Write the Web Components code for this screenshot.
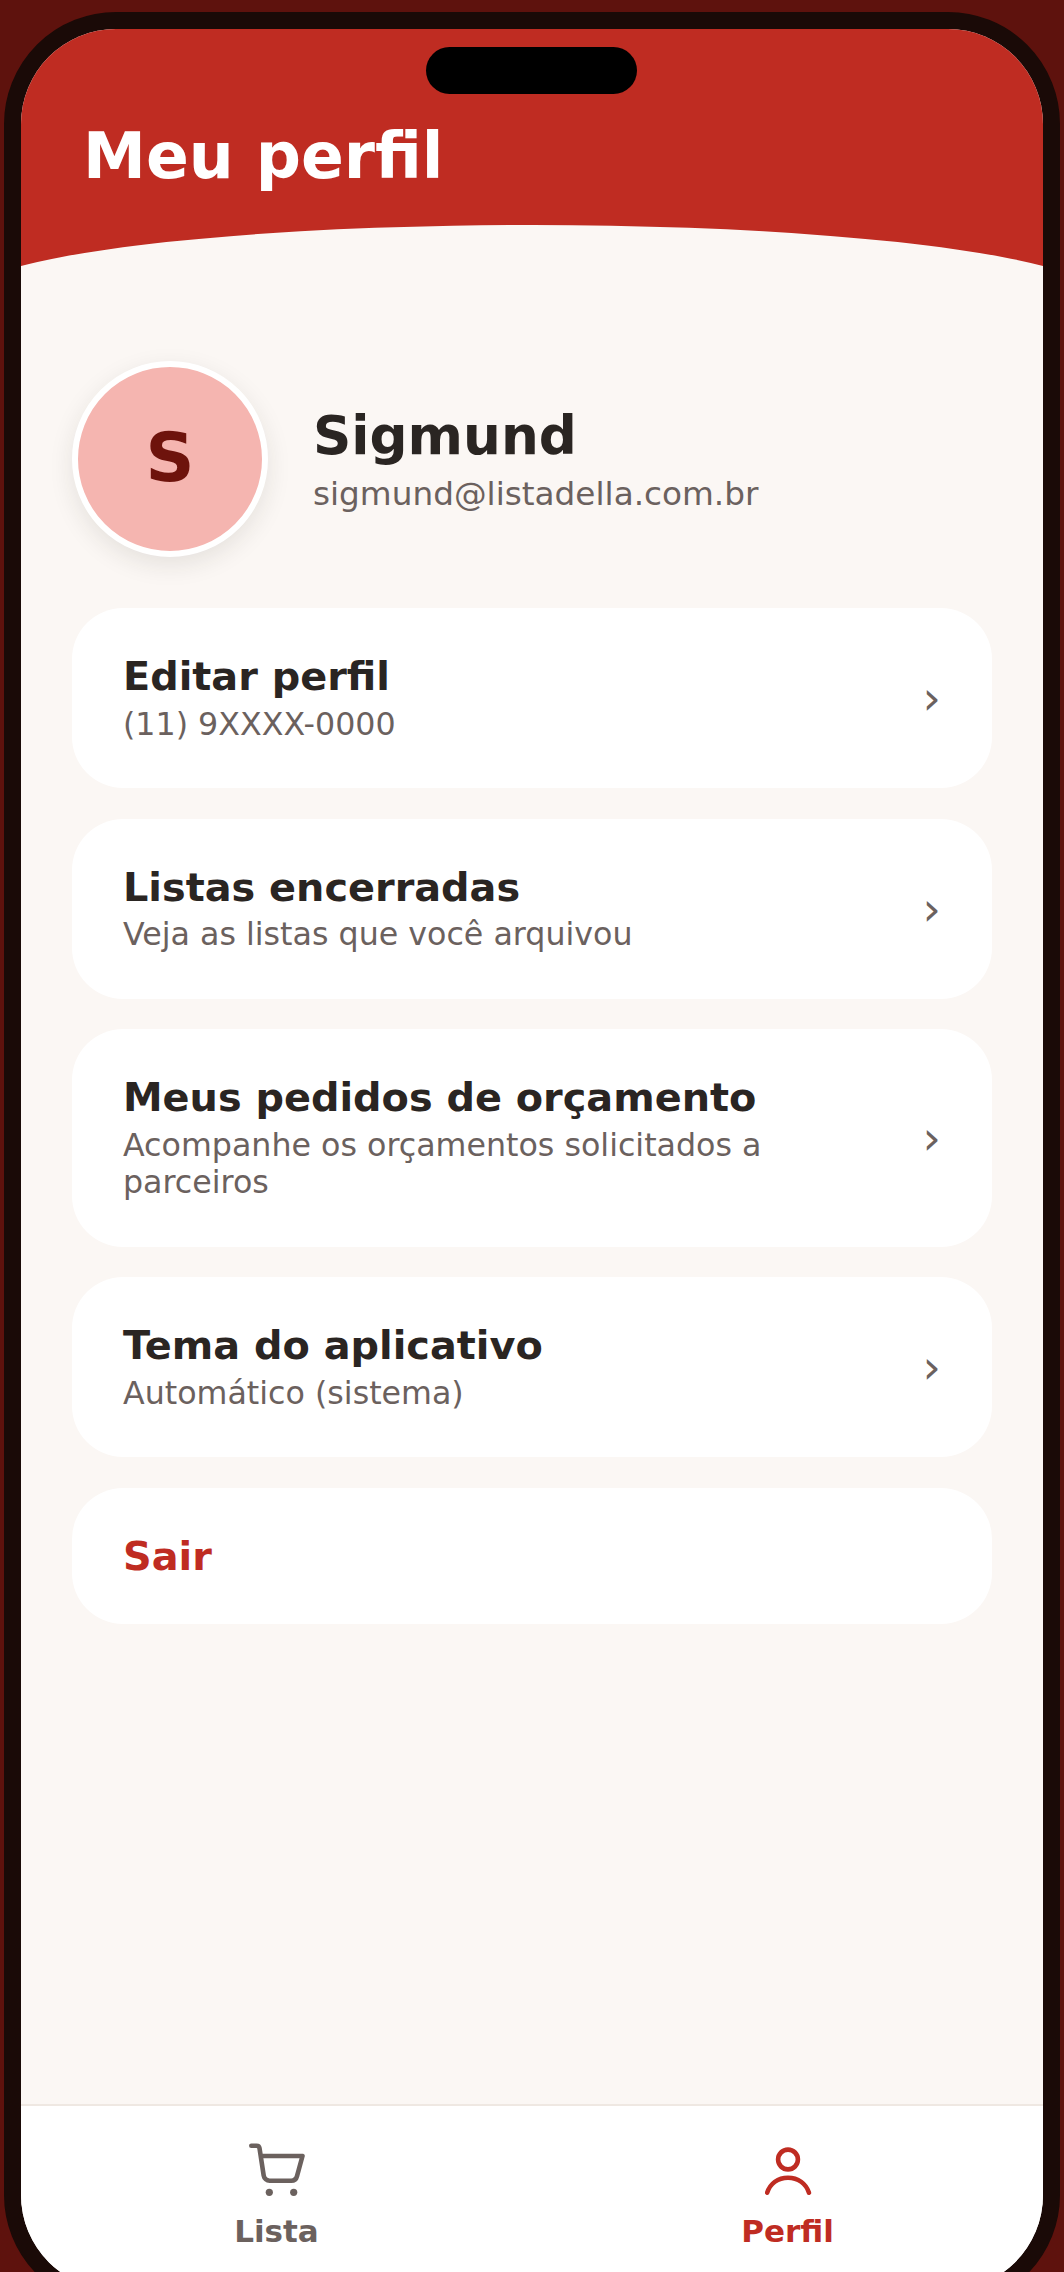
<!DOCTYPE html>
<html lang="pt-BR">
<head>
<meta charset="utf-8">
<title>Meu perfil</title>
<style>
  html, body { margin: 0; height: 2272px; overflow: hidden; background: #5e120d; }
  body { padding: 12px 4px 0; box-sizing: border-box; font-family: 'DejaVu Sans', sans-serif; }
</style>
</head>
<body>
<phone-frame>
  <app-header title="Meu perfil"></app-header>
  <profile-page>
    <profile-head initial="S" name="Sigmund" email="sigmund@listadella.com.br"></profile-head>
    <menu-card label="Editar perfil" sub="(11) 9XXXX-0000"></menu-card>
    <menu-card label="Listas encerradas" sub="Veja as listas que você arquivou"></menu-card>
    <menu-card label="Meus pedidos de orçamento" sub="Acompanhe os orçamentos solicitados a parceiros"></menu-card>
    <menu-card label="Tema do aplicativo" sub="Automático (sistema)"></menu-card>
    <menu-card label="Sair" danger></menu-card>
  </profile-page>
  <bottom-nav>
    <nav-item label="Lista" icon="cart"></nav-item>
    <nav-item label="Perfil" icon="user" active></nav-item>
  </bottom-nav>
</phone-frame>

<script>
  // moldura do aparelho: a tela fica dentro, o notch por cima
  class PhoneFrame extends HTMLElement {
    constructor() {
      super()
      this.attachShadow({ mode: 'open' })
      this.shadowRoot.innerHTML = `
        <style>
          :host {
            display: block;
            width: 1056px;
            height: 2295px;
            box-sizing: border-box;
            border: 17px solid #1a0a07;
            border-radius: 112px;
            background: #1a0a07;
            position: relative;
          }
          .screen {
            height: 100%;
            display: flex;
            flex-direction: column;
            background: #fbf7f4;
            border-radius: 95px;
            overflow: hidden;
          }
          .notch {
            position: absolute;
            top: 18px;
            left: 405px;
            width: 211px;
            height: 47px;
            border-radius: 24px;
            background: #000;
          }
        </style>
        <div class="screen"><slot></slot></div>
        <div class="notch"></div>
      `
    }
  }

  class AppHeader extends HTMLElement {
    constructor() {
      super()
      this.attachShadow({ mode: 'open' })
    }

    connectedCallback() {
      this.shadowRoot.innerHTML = `
        <style>
          :host { display: block; background: #bf2c22; flex: none; }
          h1 {
            margin: 0;
            padding: 91px 0 32px 62px;
            font: 700 63.2px/73px 'DejaVu Sans', sans-serif;
            color: #fff;
          }
          svg { display: block; width: 100%; height: 41px; }
        </style>
        <h1>${this.getAttribute('title')}</h1>
        <svg viewBox="0 0 1022 41" preserveAspectRatio="none">
          <path d="M0 41A568 72.7 0 0 1 1022 41Z" fill="#fbf7f4"/>
        </svg>
      `
    }
  }

  class ProfilePage extends HTMLElement {
    constructor() {
      super()
      this.attachShadow({ mode: 'open' })
      this.shadowRoot.innerHTML = `
        <style>
          :host {
            display: flex;
            flex-direction: column;
            gap: 30.5px;
            flex: 1;
            padding: 95px 51px 0;
            min-height: 0;
          }
        </style>
        <slot></slot>
      `
    }
  }

  class ProfileHead extends HTMLElement {
    constructor() {
      super()
      this.attachShadow({ mode: 'open' })
    }

    connectedCallback() {
      this.shadowRoot.innerHTML = `
        <style>
          :host {
            display: flex;
            align-items: center;
            gap: 45px;
            margin-bottom: 20.5px;
          }
          .avatar {
            width: 196px;
            height: 196px;
            box-sizing: border-box;
            flex: none;
            display: flex;
            align-items: center;
            justify-content: center;
            padding-bottom: 4px;
            border: 6px solid #fff;
            border-radius: 50%;
            background: #f5b5b0;
            box-shadow: 0 8px 24px rgba(42, 37, 34, 0.1);
            color: #6e130c;
            font-size: 68px;
            font-weight: 700;
          }
          .info { padding-bottom: 1px; }
          .name { font-size: 53.2px; font-weight: 700; color: #2a2522; }
          .email { font-size: 32.7px; color: #6b615e; margin-top: 8px; }
        </style>
        <div class="avatar">${this.getAttribute('initial')}</div>
        <div class="info">
          <div class="name">${this.getAttribute('name')}</div>
          <div class="email">${this.getAttribute('email')}</div>
        </div>
      `
    }
  }

  class MenuCard extends HTMLElement {
    constructor() {
      super()
      this.attachShadow({ mode: 'open' })
    }

    connectedCallback() {
      const sub = this.getAttribute('sub')
      const danger = this.hasAttribute('danger')

      this.shadowRoot.innerHTML = `
        <style>
          :host {
            display: flex;
            align-items: center;
            gap: 32px;
            padding: 45px 51px;
            background: #fff;
            border-radius: 51px;
          }
          .text { flex: 1; min-width: 0; }
          .label { font-size: 39.8px; line-height: 46px; font-weight: 700; color: ${danger ? '#bf2c22' : '#2a2522'}; }
          .sub { font-size: 31.7px; line-height: 37.5px; color: #6b615e; margin-top: 6.5px; }
          .chevron { font-size: 46px; line-height: 1; color: #6b615e; }
        </style>
        <div class="text">
          <div class="label">${this.getAttribute('label')}</div>
          ${sub ? `<div class="sub">${sub}</div>` : ''}
        </div>
        ${danger ? '' : '<span class="chevron">›</span>'}
      `
    }
  }

  class BottomNav extends HTMLElement {
    constructor() {
      super()
      this.attachShadow({ mode: 'open' })
      this.shadowRoot.innerHTML = `
        <style>
          :host {
            display: grid;
            grid-template-columns: 1fr 1fr;
            flex: none;
            height: 186px;
            box-sizing: border-box;
            background: #fff;
            border-top: 2px solid #efe8e2;
          }
        </style>
        <slot></slot>
      `
    }
  }

  const NAV_ICONS = {
    cart: `
      <path d="M2.3 4.7H7.5a3 3 0 0 1 3 2.5l4.2 27.5a6 6 0 0 0 6 5h21.5a6 6 0 0 0 5.8-4.6L53.5 15H11.7"/>
      <circle cx="20.3" cy="51.3" r="3.6" fill="currentColor" stroke="none"/>
      <circle cx="44.7" cy="51.3" r="3.6" fill="currentColor" stroke="none"/>`,
    user: `
      <circle cx="28" cy="18.5" r="9.9"/>
      <path d="M7.2 51.7C10 42.5 18 36.7 28 36.7S46 42.5 49 51.7"/>`,
  }

  class NavItem extends HTMLElement {
    constructor() {
      super()
      this.attachShadow({ mode: 'open' })
    }

    connectedCallback() {
      const active = this.hasAttribute('active')

      this.shadowRoot.innerHTML = `
        <style>
          :host {
            display: flex;
            flex-direction: column;
            align-items: center;
            padding-top: 35px;
            color: ${active ? '#bf2c22' : '#6b615e'};
          }
          svg {
            flex: none;
            width: 56px;
            height: 56px;
            fill: none;
            stroke: currentColor;
            stroke-width: 4.6;
            stroke-linecap: round;
            stroke-linejoin: round;
          }
          span { font-size: 31px; font-weight: 700; margin-top: 16px; }
        </style>
        <svg viewBox="0 0 56 56">${NAV_ICONS[this.getAttribute('icon')]}</svg>
        <span>${this.getAttribute('label')}</span>
      `
    }
  }

  customElements.define('phone-frame', PhoneFrame)
  customElements.define('app-header', AppHeader)
  customElements.define('profile-page', ProfilePage)
  customElements.define('profile-head', ProfileHead)
  customElements.define('menu-card', MenuCard)
  customElements.define('bottom-nav', BottomNav)
  customElements.define('nav-item', NavItem)
</script>
</body>
</html>
